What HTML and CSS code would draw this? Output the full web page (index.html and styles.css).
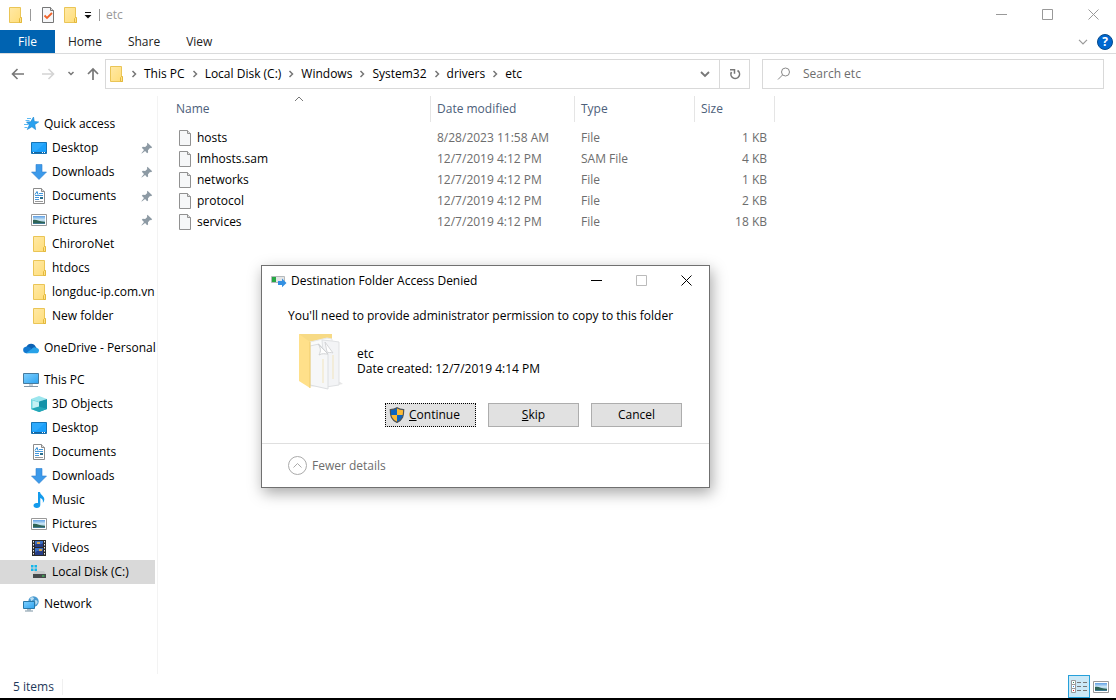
FILE: index.html
```html
<!DOCTYPE html>
<html lang="en">
<head>
    <meta charset="UTF-8">
    <meta name="viewport" content="width=device-width, initial-scale=1.0">
    <title>etc</title>
    <link rel="stylesheet" href="styles.css">
</head>
<body>

    <!-- Shared icons -->
    <svg class="sprite" aria-hidden="true">
        <defs>
            <linearGradient id="gradFolder" x1="0" y1="0" x2="1" y2="1">
                <stop offset="0" stop-color="#ffe9a6"/><stop offset="1" stop-color="#ffdd78"/>
            </linearGradient>
            <linearGradient id="gradScreen" x1="0" y1="0" x2="1" y2="1">
                <stop offset="0" stop-color="#7fd0ff"/><stop offset="1" stop-color="#2ea3f0"/>
            </linearGradient>
            <linearGradient id="gradPhoto" x1="0" y1="0" x2="0" y2="1">
                <stop offset="0" stop-color="#5f9fe4"/><stop offset="0.5" stop-color="#d3ecf8"/><stop offset="1" stop-color="#2c6a86"/>
            </linearGradient>
        </defs>
        <symbol id="folder" viewBox="0 0 16 16">
            <path d="M2.500 .5h11v10.500h1v4.500h-12z" fill="url(#gradFolder)" stroke="#eac556"/>
            <path d="M12.500 15.500v-4l1-1h1v5z" fill="#ffe18a" stroke="#e3b93c"/>
        </symbol>
        <symbol id="file" viewBox="0 0 16 16">
            <path d="M2.500 .5h8l3 3v12h-11z" fill="#f6f7f8" stroke="#919191"/>
            <path d="M10.500 .5v3h3" fill="#e0e0e0" stroke="#919191"/>
        </symbol>
        <symbol id="star" viewBox="0 0 16 16">
            <path d="M10.500 1l.8 4.500 4.400.4-3.900 2.700.8 5-3.700-2.800-4.600 2.700 2-4.500L3.500 6l4.200-.2z" fill="#2aa1ef" stroke="#1583cf" stroke-width=".6"/>
            <path d="M4 2.500h4M2.500 4.500h4M1 8.500h4M1.500 11.500h3" stroke="#5bb9f3"/>
        </symbol>
        <symbol id="desktop" viewBox="0 0 16 16">
            <path d="M.5 2.500h15v11H.5z" fill="#1ba0fb" stroke="#1573b5"/>
            <path d="M1 3h13L5 11H1z" fill="#3bb0ff" opacity=".6"/>
            <path d="M1 12.500h14" stroke="#17649d"/><path d="M2 12.500h1M11 12.500h1M13 12.500h1" stroke="#fff"/>
        </symbol>
        <symbol id="downloads" viewBox="0 0 16 16">
            <path d="M5 .5h6v7.500h4.500L8 15.500.5 8H5z" fill="#3c9aea" stroke="#2f82d0" stroke-width=".6"/>
        </symbol>
        <symbol id="documents" viewBox="0 0 16 16">
            <path d="M2.500 .5h8l3 3v12h-11z" fill="#fff" stroke="#8b8b8b"/>
            <path d="M10.500 .5v3h3" fill="#ddd" stroke="#8b8b8b"/>
            <path d="M4 6.500l2-3 1 3" fill="none" stroke="#2586d2"/>
            <path d="M8 5.500h4M4 7.500h8M4 9.500h4M4 11.500h4" stroke="#4598dc"/>
            <path d="M9 9h3v2H9z" fill="#2b6f8d"/><path d="M4 13.500h8" stroke="#999"/>
        </symbol>
        <symbol id="pictures" viewBox="0 0 16 16">
            <path d="M.5 2.500h15v11H.5z" fill="#fff" stroke="#999"/>
            <path d="M2 4h12v8H2z" fill="url(#gradPhoto)"/>
            <path d="M2 8c3-1 6 1.500 12 2v1H2z" fill="#2f6456"/>
        </symbol>
        <symbol id="pin" viewBox="0 0 12 12">
            <path d="M6.500 .8l4.700 4.400-1.200 1-1-.2-2 2.200.1 2.300-1 .8-2-2.200L.8 11.500l-.4-.3L3 8 .8 5.800l1-1 2.400.2L6.300 3l-.4-1z" fill="#8d9aa4"/>
        </symbol>
        <symbol id="onedrive" viewBox="0 0 16 16">
            <path d="M3.500 7a5 5 0 0 1 9.200-.2L14 8.500 8 11z" fill="#0c62b4"/>
            <path d="M3 13.200A3.300 3.300 0 0 1 2.800 6.700C5 6.200 7 7.500 9 9l-3 4z" fill="#1379cf"/>
            <path d="M3 13.300l6-4.500c1-1.500 3.200-2 4.500-.7 2.200.3 3 2.200 2.200 3.600-.4 1-1.200 1.600-2.500 1.600z" fill="#28a2e8"/>
        </symbol>
        <symbol id="computer" viewBox="0 0 16 16">
            <path d="M.5 1.500h15v10H.5z" fill="url(#gradScreen)" stroke="#477b9e"/>
            <path d="M6 12h4v2H6z" fill="#c3ced6"/><path d="M1 14.500h14" stroke="#8496a5"/>
        </symbol>
        <symbol id="cube" viewBox="0 0 16 16">
            <path d="M0 3l8-3 8 3-8 2.500z" fill="#9ce6ee"/>
            <path d="M0 3l8 2.500V16l-8-3z" fill="#6fd6e0"/>
            <path d="M16 3L8 5.500V16l8-3z" fill="#1492a8"/>
            <path d="M1.500 4.500L8 6.500V11l-6.500 1z" fill="#c4f1f4"/>
            <path d="M0 13l8-2.500L16 13l-8 3z" fill="#23a7b8"/>
        </symbol>
        <symbol id="music" viewBox="0 0 16 16">
            <path d="M7 0h2c.3 3 4.500 4 4.300 7.500-.1 1.500-.8 2.500-1.500 3.300.6-2.600-.3-4-2.500-4.800V13c0 1.800-1.500 3-3.500 3S2.500 15 2.500 13.500 4 11 5.500 11H7z" fill="#149bec"/>
        </symbol>
        <symbol id="videos" viewBox="0 0 16 16">
            <path d="M1 0h14v16H1z" fill="#2a2a2a"/>
            <path d="M4 1h8v6H4zM4 8h8v7H4z" fill="#3c70c4"/>
            <path d="M4 5c3-3 5 1 8-2v4H4zM4 13c3-4 4 0 8-3v5H4z" fill="#263d85"/>
            <path d="M6 2h3v2H6zM8 9h3v2H8z" fill="#d9a44a"/>
            <path d="M2.500 1v15M13.500 1v15" stroke="#eee" stroke-dasharray="1.500 1.500"/>
        </symbol>
        <symbol id="disk" viewBox="0 0 16 16">
            <path d="M0 1h2.500v2.500H0zM3.500 1H6v2.500H3.500zM0 4.500h2.500V7H0zM3.500 4.500H6V7H3.500z" fill="#13b5ea"/>
            <path d="M4 7h9l2 3H2z" fill="#c7c9ca"/>
            <path d="M2 10h13v4H2z" fill="#46494b"/><path d="M11 12h2.500" stroke="#41e05d"/>
        </symbol>
        <symbol id="network" viewBox="0 0 16 16">
            <circle cx="10.500" cy="5.500" r="5.200" fill="#4a9ad0"/>
            <path d="M7 2c2-1.500 4-.6 4 .6S9 4 8.500 5.500M12 4c2 0 3 1 2.500 3l-2 2z" fill="#b9def2"/>
            <path d="M.5 5.500h11v7H.5z" fill="url(#gradScreen)" stroke="#2978a8"/>
            <path d="M4 13h4v1.500H4z" fill="#a9bac5"/><path d="M2 15h8" stroke="#7c94a4"/>
        </symbol>
        <symbol id="chevron" viewBox="0 0 8 8">
            <path d="M2.500 1l3 3-3 3" fill="none" stroke="#777" stroke-width="1.500"/>
        </symbol>
        <symbol id="minimize" viewBox="0 0 11 11"><path d="M0 5.500h11" stroke="currentColor"/></symbol>
        <symbol id="maximize" viewBox="0 0 11 11"><path d="M.5 .5h10v10H.5z" fill="none" stroke="currentColor"/></symbol>
        <symbol id="close" viewBox="0 0 11 11"><path d="M.5 .5l10 10M10.500 .5l-10 10" stroke="currentColor"/></symbol>
    </svg>

    <!-- Title bar -->
    <header class="titlebar">
        <svg class="icon"><use href="#folder"/></svg>
        <span class="divider"></span>
        <button type="button" class="tool" aria-label="Properties">
            <svg class="icon" viewBox="0 0 16 16">
                <path d="M2.500 .5h8l3 3v12h-11z" fill="#f6f7f9" stroke="#777"/>
                <path d="M10.500 .5v3h3" fill="#ddd" stroke="#777"/>
                <path d="M4.500 8.500l2.500 2.500 5-5" fill="none" stroke="#f0622a" stroke-width="1.800"/>
            </svg>
        </button>
        <button type="button" class="tool" aria-label="New folder"><svg class="icon"><use href="#folder"/></svg></button>
        <button type="button" class="tool small" aria-label="Customize toolbar">
            <svg width="8" height="8" viewBox="0 0 8 8"><path d="M1 1.500h6" stroke="#111"/><path d="M.5 4h7L4 7.500z" fill="#111"/></svg>
        </button>
        <span class="divider"></span>
        <span class="window-title">etc</span>
        <div class="window-buttons">
            <button type="button" aria-label="Minimize"><svg><use href="#minimize"/></svg></button>
            <button type="button" aria-label="Maximize"><svg><use href="#maximize"/></svg></button>
            <button type="button" aria-label="Close"><svg><use href="#close"/></svg></button>
        </div>
    </header>

    <!-- Ribbon tabs -->
    <nav class="ribbon">
        <button type="button" class="file-tab">File</button>
        <button type="button">Home</button>
        <button type="button">Share</button>
        <button type="button">View</button>
        <div class="ribbon-end">
            <button type="button" class="tool" aria-label="Expand ribbon">
                <svg width="10" height="6" viewBox="0 0 10 6"><path d="M1 .8l4 4 4-4" fill="none" stroke="#999" stroke-width="1.200"/></svg>
            </button>
            <button type="button" class="help" aria-label="Help">?</button>
        </div>
    </nav>

    <!-- Address bar -->
    <div class="addressbar">
        <div class="history">
            <button type="button" class="tool back" aria-label="Back">
                <svg width="14" height="12" viewBox="0 0 14 12"><path d="M13 6H1.500M6.500 1l-5 5 5 5" fill="none" stroke="#777" stroke-width="1.600"/></svg>
            </button>
            <button type="button" class="tool" aria-label="Forward">
                <svg width="14" height="12" viewBox="0 0 14 12"><path d="M1 6h11.500M7.500 1l5 5-5 5" fill="none" stroke="#d4d4d4" stroke-width="1.600"/></svg>
            </button>
            <button type="button" class="tool" aria-label="Recent locations">
                <svg width="8" height="6" viewBox="0 0 8 6"><path d="M1.500 1L4 3.500 6.500 1" fill="none" stroke="#777" stroke-width="1.500"/></svg>
            </button>
            <button type="button" class="tool" aria-label="Up">
                <svg width="12" height="14" viewBox="0 0 12 14"><path d="M6 13V2M1 7l5-5 5 5" fill="none" stroke="#777" stroke-width="1.700"/></svg>
            </button>
        </div>
        <div class="path">
            <svg class="icon"><use href="#folder"/></svg>
            <svg class="sep"><use href="#chevron"/></svg>
            <a href="#">This PC</a>
            <svg class="sep"><use href="#chevron"/></svg>
            <a href="#">Local Disk (C:)</a>
            <svg class="sep"><use href="#chevron"/></svg>
            <a href="#">Windows</a>
            <svg class="sep"><use href="#chevron"/></svg>
            <a href="#">System32</a>
            <svg class="sep"><use href="#chevron"/></svg>
            <a href="#">drivers</a>
            <svg class="sep"><use href="#chevron"/></svg>
            <a href="#">etc</a>
            <button type="button" class="tool previous" aria-label="Previous locations">
                <svg width="10" height="7" viewBox="0 0 10 7"><path d="M1 1l4 4 4-4" fill="none" stroke="#777" stroke-width="1.800"/></svg>
            </button>
            <button type="button" class="refresh" aria-label="Refresh">
                <svg width="12" height="12" viewBox="0 0 12 12"><path d="M8.500 2.500A4.300 4.300 0 1 1 2.500 4" fill="none" stroke="#777" stroke-width="1.600"/><path d="M1 1.700h4.500v4" fill="none" stroke="#777" stroke-width="1.500"/></svg>
            </button>
        </div>
        <form class="search">
            <svg width="14" height="14" viewBox="0 0 14 14"><circle cx="8.500" cy="5" r="4" fill="none" stroke="#888"/><path d="M5.500 8L1 12.500" stroke="#888"/></svg>
            <input type="text" placeholder="Search etc" aria-label="Search etc">
        </form>
    </div>

    <main class="content">
        <!-- Navigation pane -->
        <aside class="sidebar">
            <ul>
                <li class="root"><a href="#"><svg class="icon"><use href="#star"/></svg>Quick access</a></li>
                <li><a href="#"><svg class="icon"><use href="#desktop"/></svg>Desktop<svg class="pin"><use href="#pin"/></svg></a></li>
                <li><a href="#"><svg class="icon"><use href="#downloads"/></svg>Downloads<svg class="pin"><use href="#pin"/></svg></a></li>
                <li><a href="#"><svg class="icon"><use href="#documents"/></svg>Documents<svg class="pin"><use href="#pin"/></svg></a></li>
                <li><a href="#"><svg class="icon"><use href="#pictures"/></svg>Pictures<svg class="pin"><use href="#pin"/></svg></a></li>
                <li><a href="#"><svg class="icon"><use href="#folder"/></svg>ChiroroNet</a></li>
                <li><a href="#"><svg class="icon"><use href="#folder"/></svg>htdocs</a></li>
                <li><a href="#"><svg class="icon"><use href="#folder"/></svg>longduc-ip.com.vn</a></li>
                <li><a href="#"><svg class="icon"><use href="#folder"/></svg>New folder</a></li>
            </ul>
            <ul>
                <li class="root"><a href="#"><svg class="icon"><use href="#onedrive"/></svg>OneDrive - Personal</a></li>
            </ul>
            <ul>
                <li class="root"><a href="#"><svg class="icon"><use href="#computer"/></svg>This PC</a></li>
                <li><a href="#"><svg class="icon"><use href="#cube"/></svg>3D Objects</a></li>
                <li><a href="#"><svg class="icon"><use href="#desktop"/></svg>Desktop</a></li>
                <li><a href="#"><svg class="icon"><use href="#documents"/></svg>Documents</a></li>
                <li><a href="#"><svg class="icon"><use href="#downloads"/></svg>Downloads</a></li>
                <li><a href="#"><svg class="icon"><use href="#music"/></svg>Music</a></li>
                <li><a href="#"><svg class="icon"><use href="#pictures"/></svg>Pictures</a></li>
                <li><a href="#"><svg class="icon"><use href="#videos"/></svg>Videos</a></li>
                <li class="selected"><a href="#"><svg class="icon"><use href="#disk"/></svg>Local Disk (C:)</a></li>
            </ul>
            <ul>
                <li class="root"><a href="#"><svg class="icon"><use href="#network"/></svg>Network</a></li>
            </ul>
        </aside>

        <!-- File list -->
        <section class="files">
            <table>
                <colgroup>
                    <col class="col-name"><col class="col-date"><col class="col-type"><col class="col-size">
                </colgroup>
                <thead>
                    <tr>
                        <th>Name<svg class="sort" viewBox="0 0 10 6"><path d="M1 5l4-4 4 4" fill="none" stroke="#777"/></svg></th>
                        <th>Date modified</th>
                        <th>Type</th>
                        <th>Size</th>
                    </tr>
                </thead>
                <tbody>
                    <tr><td><svg class="icon"><use href="#file"/></svg>hosts</td><td>8/28/2023 11:58 AM</td><td>File</td><td>1 KB</td></tr>
                    <tr><td><svg class="icon"><use href="#file"/></svg>lmhosts.sam</td><td>12/7/2019 4:12 PM</td><td>SAM File</td><td>4 KB</td></tr>
                    <tr><td><svg class="icon"><use href="#file"/></svg>networks</td><td>12/7/2019 4:12 PM</td><td>File</td><td>1 KB</td></tr>
                    <tr><td><svg class="icon"><use href="#file"/></svg>protocol</td><td>12/7/2019 4:12 PM</td><td>File</td><td>2 KB</td></tr>
                    <tr><td><svg class="icon"><use href="#file"/></svg>services</td><td>12/7/2019 4:12 PM</td><td>File</td><td>18 KB</td></tr>
                </tbody>
            </table>
        </section>
    </main>

    <!-- Status bar -->
    <footer class="statusbar">
        <span class="count">5 items</span>
        <button type="button" class="view active" aria-label="Details view">
            <svg width="16" height="14" viewBox="0 0 16 14">
                <path d="M.5 .5h4v4h-4zM.5 4.500h4v4h-4zM.5 8.500h4v4h-4z" fill="#fff" stroke="#999"/>
                <path d="M2 2.500h1" stroke="#3c8a5c"/><path d="M2 6.500h1" stroke="#2a8ae0"/><path d="M2 10.500h1" stroke="#e02020"/>
                <path d="M6 2.500h4M12 2.500h4M6 6.500h4M12 6.500h4M6 10.500h4M12 10.500h4" stroke="#777"/>
            </svg>
        </button>
        <button type="button" class="view" aria-label="Large icons view"><svg class="icon"><use href="#pictures"/></svg></button>
    </footer>

    <!-- Access denied dialog -->
    <div class="dialog" role="dialog" aria-labelledby="dialogTitle">
        <div class="dialog-title">
            <svg class="icon" viewBox="0 0 16 16">
                <path d="M.5 3.500h13v6H.5z" fill="#e3e5e6" stroke="#b5b9bb"/>
                <path d="M1 4h4v5H1z" fill="#27a844"/>
                <path d="M7 8h4V5.500l4.500 4.500L11 14.200V12H7z" fill="#3390e2"/>
            </svg>
            <span id="dialogTitle">Destination Folder Access Denied</span>
            <div class="window-buttons">
                <button type="button" aria-label="Minimize"><svg><use href="#minimize"/></svg></button>
                <button type="button" aria-label="Maximize" disabled><svg><use href="#maximize"/></svg></button>
                <button type="button" aria-label="Close"><svg><use href="#close"/></svg></button>
            </div>
        </div>
        <div class="dialog-body">
            <p>You'll need to provide administrator permission to copy to this folder</p>
            <div class="item">
                <svg width="48" height="58" viewBox="0 0 48 58">
                    <path d="M3 2h33v20H10z" fill="#f7da85"/>
                    <path d="M36 54l11-2-3-2-8 1z" fill="#e6e6e6"/>
                    <path d="M14 10l17-4 5 1v46l-22 1z" fill="#fafbfb" stroke="#e8e9ea"/>
                    <path d="M26 8l10 1 7 1v43l-13 2z" fill="#f3f4f6" stroke="#dfe1e3"/>
                    <path d="M29 10l8 11c-2-1-5 0-6-1z" fill="#fff" stroke="#d5d6d8"/>
                    <path d="M14 14l9-2 9 10v35l-18-4z" fill="#f6f7f8" stroke="#dcdee1"/>
                    <path d="M22 12c3 4 3 7 1 11 3-2 6-1 9-1z" fill="#fff" stroke="#cfd1d3"/>
                    <path d="M27 27v24M37 23v24" stroke="#f1e4bd"/>
                    <path d="M3 2l11 8v46L3 49z" fill="#ffe08a"/>
                    <path d="M14 10v46" stroke="#efcd6c"/>
                </svg>
                <div>etc<br>Date created: 12/7/2019 4:14 PM</div>
            </div>
            <div class="actions">
                <button type="button" class="continue">
                    <svg width="16" height="16" viewBox="0 0 16 16">
                        <path d="M8 .5C6 2 4 2.500 1.300 2.500c0 6 .7 10 6.700 13 6-3 6.700-7 6.700-13C12 2.500 10 2 8 .5z" fill="#0d66c2"/>
                        <path d="M8 .5V8h6.500c.2-1.500.2-3 .2-5.500C12 2.500 10 2 8 .5zM1.500 8H8v7.500C4 13.500 2 11 1.500 8z" fill="#fdbb35"/>
                        <path d="M8 .8C6 2.200 4 2.700 1.300 2.700c0 6 .7 9.700 6.700 12.700 6-3 6.700-6.700 6.700-12.700C12 2.700 10 2.200 8 .8z" fill="none" stroke="#4f5357" stroke-width="1.200"/>
                    </svg>
                    <span><u>C</u>ontinue</span>
                </button>
                <button type="button"><span><u>S</u>kip</span></button>
                <button type="button">Cancel</button>
            </div>
        </div>
        <div class="dialog-footer">
            <button type="button" class="tool">
                <svg width="19" height="19" viewBox="0 0 19 19"><circle cx="9.500" cy="9.500" r="9" fill="#fff" stroke="#aaa"/><path d="M5.500 11.500l4-4 4 4" fill="none" stroke="#aaa"/></svg>
                Fewer details
            </button>
        </div>
    </div>

</body>
</html>
```
FILE: styles.css
```css
* {
    box-sizing: border-box;
}
body {
    display: flex;
    flex-direction: column;
    min-height: 100vh;
    margin: 0;
    border-bottom: 2px solid #000;
    background-color: #fff;
    color: #000;
    font-family: "Open Sans", "Noto Sans", sans-serif;
    font-size: 12px;
    line-height: 16px;
}
svg {
    display: block;
    flex-shrink: 0;
}
a {
    color: inherit;
    text-decoration: none;
}
ul {
    list-style-type: none;
    margin: 0;
    padding: 0;
}
button {
    display: flex;
    align-items: center;
    justify-content: center;
    padding: 0;
    border: none;
    background: none;
    color: inherit;
    font: inherit;
    white-space: nowrap;
}
.sprite {
    position: absolute;
    width: 0;
    height: 0;
}
.icon {
    width: 16px;
    height: 16px;
}

/* Title bar */
.titlebar {
    display: flex;
    align-items: center;
    height: 30px;
    padding-left: 7px;
    gap: 6px;
    color: #999;
}
.titlebar .divider {
    width: 1px;
    height: 12px;
    margin: 0 3px 0 1px;
    background-color: #999;
}
.titlebar .window-title {
    margin-left: -3px;
}
.window-buttons {
    display: flex;
    align-self: flex-start;
    height: 29px;
    margin-left: auto;
}
.window-buttons button {
    width: 46px;
}
.window-buttons svg {
    width: 11px;
    height: 11px;
}

/* Ribbon */
.ribbon {
    display: flex;
    height: 24px;
    border-bottom: 1px solid #dadbdc;
    color: #222;
}
.ribbon > button {
    padding: 0 13px;
}
.ribbon .file-tab {
    width: 55px;
    background-color: #0063b1;
    color: #fff;
}
.ribbon-end {
    display: flex;
    align-items: center;
    gap: 9px;
    margin-left: auto;
    padding-right: 3px;
}
.help {
    width: 16px;
    height: 16px;
    border: 1px solid #064a8c;
    border-radius: 50%;
    background-color: #0067cf;
    color: #fff;
    font-weight: bold;
}

/* Address bar */
.addressbar {
    display: flex;
    align-items: center;
    height: 42px;
    padding: 0 12px 2px 11px;
}
.history {
    display: flex;
    align-items: center;
    gap: 12px;
    margin-right: 6px;
}
.history .back {
    margin-right: 4px;
}
.path,
.search {
    display: flex;
    align-items: center;
    height: 30px;
    border: 1px solid #d9d9d9;
}
.path {
    flex: 2 1 645px;
    padding-left: 2px;
}
.path .sep {
    width: 8px;
    height: 8px;
    margin: 0 6px;
}
.path .previous {
    width: 28px;
    margin-left: auto;
}
.refresh {
    align-self: stretch;
    width: 30px;
    border-left: 1px solid #d9d9d9;
}
.search {
    flex: 1 1 342px;
    margin-left: 12px;
    padding-left: 14px;
}
.search input {
    flex: 1;
    min-width: 0;
    padding: 0 12px;
    border: none;
    outline: none;
    font: inherit;
}
.search input::placeholder {
    color: #6d6d6d;
}

/* Navigation pane */
.content {
    display: flex;
    flex: 1;
}
.sidebar {
    width: 158px;
    padding: 16px 2px 0 0;
    border-right: 1px solid #f3f3f3;
}
.sidebar ul {
    margin-bottom: 8px;
}
.sidebar a {
    display: flex;
    align-items: center;
    gap: 5px;
    height: 24px;
    padding-left: 31px;
    white-space: nowrap;
}
.sidebar .root a {
    padding-left: 23px;
}
.sidebar .selected {
    background-color: #d9d9d9;
}
.sidebar .pin {
    width: 12px;
    height: 12px;
    margin: 0 2px 0 auto;
}

/* File list */
.files {
    flex: 1;
}
table {
    width: 617px;
    border-spacing: 0;
    table-layout: fixed;
}
.col-name {
    width: 273px;
}
.col-date {
    width: 144px;
}
.col-type {
    width: 120px;
}
.col-size {
    width: 80px;
}
th {
    position: relative;
    height: 26px;
    padding: 0 6px;
    border-right: 1px solid #e5e5e5;
    color: #4c607a;
    font-weight: normal;
    text-align: left;
}
.sort {
    position: absolute;
    top: 0;
    left: 50%;
    width: 10px;
    height: 6px;
}
th:first-child {
    padding-left: 18px;
}
tbody::before {
    content: "";
    display: block;
    height: 5px;
}
td {
    height: 21px;
    padding: 0 6px;
    color: #6d6d6d;
}
td:first-child {
    display: flex;
    align-items: center;
    gap: 4px;
    padding-left: 19px;
    color: #000;
}
td:last-child {
    padding-right: 8px;
    text-align: right;
}

/* Status bar */
.statusbar {
    display: flex;
    align-items: flex-end;
    height: 24px;
    padding-right: 4px;
    color: #1e395b;
}
.count {
    margin: 0 auto 3px 0;
    padding: 0 8px 0 13px;
    border-right: 1px solid #f0f0f0;
}
.view {
    width: 22px;
    height: 23px;
}
.view.active {
    border: 1px solid #26a0da;
    background-color: #cbe8f6;
}

/* Dialog */
.dialog {
    position: absolute;
    top: 265px;
    left: 261px;
    width: 449px;
    border: 1px solid #707070;
    background-color: #fff;
    box-shadow: 2px 5px 14px rgba(0, 0, 0, 0.35);
}
.dialog-title {
    display: flex;
    align-items: center;
    gap: 4px;
    height: 30px;
    padding-left: 9px;
}
.dialog .window-buttons button {
    width: 45px;
}
.dialog .window-buttons button:disabled {
    color: #bbb;
}
.dialog-body {
    padding: 12px 27px 16px 26px;
    border-bottom: 1px solid #dfdfdf;
}
.dialog-body p {
    margin: 0;
}
.item {
    display: flex;
    align-items: center;
    gap: 13px;
    margin: 8px 0;
    padding-left: 8px;
    line-height: 15px;
}
.actions {
    display: flex;
    justify-content: flex-end;
    gap: 12px;
    padding-top: 5px;
}
.actions button {
    width: 91px;
    height: 24px;
    border: 1px solid #adadad;
    background-color: #e1e1e1;
}
.actions .continue {
    justify-content: flex-start;
    gap: 4px;
    padding-left: 3px;
    border: 1px dotted #000;
}
.dialog-footer {
    padding: 12px 26px;
    color: #6d6d6d;
}
.dialog-footer button {
    gap: 5px;
}
```
